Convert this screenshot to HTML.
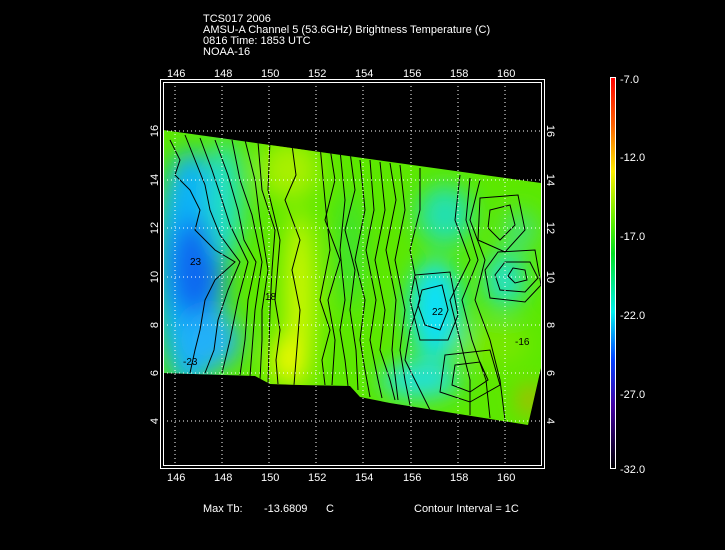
<!DOCTYPE html>
<html><head><style>
body{margin:0;background:#000;width:725px;height:550px;overflow:hidden}
svg{display:block}
text{font-family:"Liberation Sans",sans-serif;fill:#fff;font-size:11px}
text.k{fill:#000;font-size:10px}
</style></head><body>
<svg width="725" height="550" viewBox="0 0 725 550">
<defs>
<clipPath id="cp"><polygon points="163,130 541,183 541,368 528,425 390,403 360,397 350,386 300,385 270,384 255,376 163,373"/></clipPath>
<filter id="bl" x="-50%" y="-50%" width="200%" height="200%"><feGaussianBlur stdDeviation="12"/></filter>
<linearGradient id="cb" x1="0" y1="0" x2="0" y2="1">
<stop offset="0" stop-color="#ff0000"/>
<stop offset="0.12" stop-color="#ff6000"/>
<stop offset="0.24" stop-color="#ffee00"/>
<stop offset="0.38" stop-color="#50ee00"/>
<stop offset="0.45" stop-color="#00e020"/>
<stop offset="0.6" stop-color="#00f0f0"/>
<stop offset="0.72" stop-color="#0040ff"/>
<stop offset="0.84" stop-color="#4000a0"/>
<stop offset="1" stop-color="#000000"/>
</linearGradient>
</defs>
<text x="203" y="22">TCS017 2006</text>
<text x="203" y="33">AMSU-A Channel 5 (53.6GHz) Brightness Temperature (C)</text>
<text x="203" y="44">0816 Time: 1853 UTC</text>
<text x="203" y="55">NOAA-16</text>
<g clip-path="url(#cp)">
<rect x="160" y="120" width="390" height="320" fill="#5ce800"/>
<g filter="url(#bl)">
<ellipse cx="190" cy="270" rx="35" ry="120" fill="#10b0f8"/>
<ellipse cx="195" cy="270" rx="25" ry="50" fill="#0868f0"/>
<ellipse cx="225" cy="200" rx="18" ry="60" fill="#20e0c0"/>
<ellipse cx="210" cy="340" rx="30" ry="30" fill="#20b0f8"/>
<ellipse cx="300" cy="300" rx="14" ry="90" fill="#d8f800"/>
<ellipse cx="290" cy="170" rx="30" ry="30" fill="#a8f000"/>
<ellipse cx="285" cy="360" rx="14" ry="25" fill="#f0f800"/>
<ellipse cx="350" cy="250" rx="10" ry="60" fill="#30e040"/>
<ellipse cx="435" cy="310" rx="26" ry="50" fill="#10e0f8"/>
<ellipse cx="420" cy="380" rx="40" ry="18" fill="#20e0e0"/>
<ellipse cx="445" cy="215" rx="28" ry="30" fill="#20e0b0"/>
<ellipse cx="505" cy="280" rx="20" ry="28" fill="#20e0c8"/>
<ellipse cx="520" cy="230" rx="16" ry="20" fill="#40e080"/>
<ellipse cx="495" cy="345" rx="35" ry="20" fill="#78e800"/>
<ellipse cx="530" cy="400" rx="8" ry="14" fill="#f09000"/>
</g>
<g fill="none" stroke="#000" stroke-width="1">
<path d="M170,140 L180,160 175,175 190,190 200,210 195,230 215,250 235,262 215,280 205,300 200,330 195,350 190,373"/>
<path d="M185,135 L195,160 205,185 210,210 220,235 240,262 228,290 218,320 214,350 205,373"/>
<path d="M200,138 L212,170 222,200 230,225 248,262 238,300 230,340 222,373"/>
<path d="M215,140 L228,175 238,210 244,240 256,262 248,300 245,340 240,375"/>
<path d="M232,140 L240,180 252,215 262,262 255,310 252,350 250,376"/>
<path d="M245,140 L255,180 260,220 268,270 262,310 262,340 260,380"/>
<path d="M258,142 L262,190 275,230 272,270 270,310 268,384"/>
<path d="M270,140 L268,190 280,240 275,300 280,330 276,360 278,384"/>
<path d="M292,145 L296,175 285,200 300,240 292,270 300,310 294,385"/>
<path d="M320,145 L325,200 330,250 320,300 330,330 322,360 325,385"/>
<path d="M330,148 L335,180 325,220 340,260 328,300 335,340 332,385"/>
<path d="M340,150 L345,200 340,250 345,300 340,330 345,360 348,386"/>
<path d="M350,152 L355,190 345,230 355,270 350,310 356,350 358,390"/>
<path d="M360,160 L365,210 355,260 365,300 360,340 365,370 370,397"/>
<path d="M370,160 L374,210 366,250 376,300 370,340 378,380 382,398"/>
<path d="M380,162 L385,210 375,260 385,310 380,350 390,380 395,400"/>
<path d="M390,163 L396,200 386,250 396,300 392,350 398,400"/>
<path d="M400,165 L405,210 395,260 405,310 400,350 405,380 410,405"/>
<path d="M420,168 L420,210 410,250 420,300 410,330 405,360 430,410"/>
<path d="M460,175 L455,220 470,260 450,300 460,340 470,380 470,415"/>
<path d="M470,178 L466,220 478,260 462,300 472,340 486,380 490,418"/>
<path d="M480,180 L470,220 485,260 475,300 490,340 500,380 505,420"/>
<path d="M513,268 L525,270 527,280 515,283 508,276Z"/>
<path d="M505,262 L530,262 538,278 525,292 500,290 495,275Z"/>
<path d="M498,252 L535,250 541,285 525,302 490,298 485,270Z"/>
<path d="M490,210 L510,205 515,225 500,240 488,228Z"/>
<path d="M480,198 L518,195 525,230 505,252 478,240Z"/>
<path d="M422,290 L442,285 448,310 440,330 425,325 418,305Z"/>
<path d="M415,275 L450,272 458,315 448,340 420,340 410,300Z"/>
<path d="M455,365 L480,362 488,380 470,392 452,385Z"/>
<path d="M445,355 L490,350 500,385 470,402 440,392Z"/>
</g>
<text class="k" x="190" y="265">23</text><text class="k" x="265" y="300">18</text><text class="k" x="515" y="345">-16</text><text class="k" x="432" y="315">22</text><text class="k" x="183" y="365">-23</text>
</g>
<g stroke="#fff" stroke-width="1" stroke-dasharray="1,3" fill="none">
<path d="M175,82V465M222,82V465M269,82V465M316,82V465M363,82V465M411,82V465M458,82V465M505,82V465"/>
<path d="M163,131H541M163,180H541M163,228H541M163,277H541M163,325H541M163,373H541M163,421H541"/>
</g>
<rect x="160.5" y="79.5" width="384" height="389" fill="none" stroke="#fff"/>
<rect x="163.5" y="82.5" width="378" height="383" fill="none" stroke="#fff"/>
<g font-size="11">
<text x="167" y="77">146</text><text x="214" y="77">148</text><text x="261" y="77">150</text><text x="308" y="77">152</text><text x="355" y="77">154</text><text x="403" y="77">156</text><text x="450" y="77">158</text><text x="497" y="77">160</text>
<text x="167" y="481">146</text><text x="214" y="481">148</text><text x="261" y="481">150</text><text x="308" y="481">152</text><text x="355" y="481">154</text><text x="403" y="481">156</text><text x="450" y="481">158</text><text x="497" y="481">160</text>
</g>
<g>
<text transform="translate(158,131) rotate(-90)" text-anchor="middle">16</text>
<text transform="translate(158,180) rotate(-90)" text-anchor="middle">14</text>
<text transform="translate(158,228) rotate(-90)" text-anchor="middle">12</text>
<text transform="translate(158,277) rotate(-90)" text-anchor="middle">10</text>
<text transform="translate(158,325) rotate(-90)" text-anchor="middle">8</text>
<text transform="translate(158,373) rotate(-90)" text-anchor="middle">6</text>
<text transform="translate(158,421) rotate(-90)" text-anchor="middle">4</text>
<text transform="translate(547,131) rotate(90)" text-anchor="middle">16</text>
<text transform="translate(547,180) rotate(90)" text-anchor="middle">14</text>
<text transform="translate(547,228) rotate(90)" text-anchor="middle">12</text>
<text transform="translate(547,277) rotate(90)" text-anchor="middle">10</text>
<text transform="translate(547,325) rotate(90)" text-anchor="middle">8</text>
<text transform="translate(547,373) rotate(90)" text-anchor="middle">6</text>
<text transform="translate(547,421) rotate(90)" text-anchor="middle">4</text>
</g>
<rect x="610.5" y="77.5" width="5" height="391" fill="url(#cb)" stroke="#fff"/>
<g>
<text x="620" y="83">-7.0</text>
<text x="620" y="161">-12.0</text>
<text x="620" y="240">-17.0</text>
<text x="620" y="319">-22.0</text>
<text x="620" y="398">-27.0</text>
<text x="620" y="473">-32.0</text>
</g>
<text x="203" y="512">Max Tb:</text>
<text x="264" y="512">-13.6809</text>
<text x="326" y="512">C</text>
<text x="414" y="512">Contour Interval = 1C</text>
</svg>
</body></html>
